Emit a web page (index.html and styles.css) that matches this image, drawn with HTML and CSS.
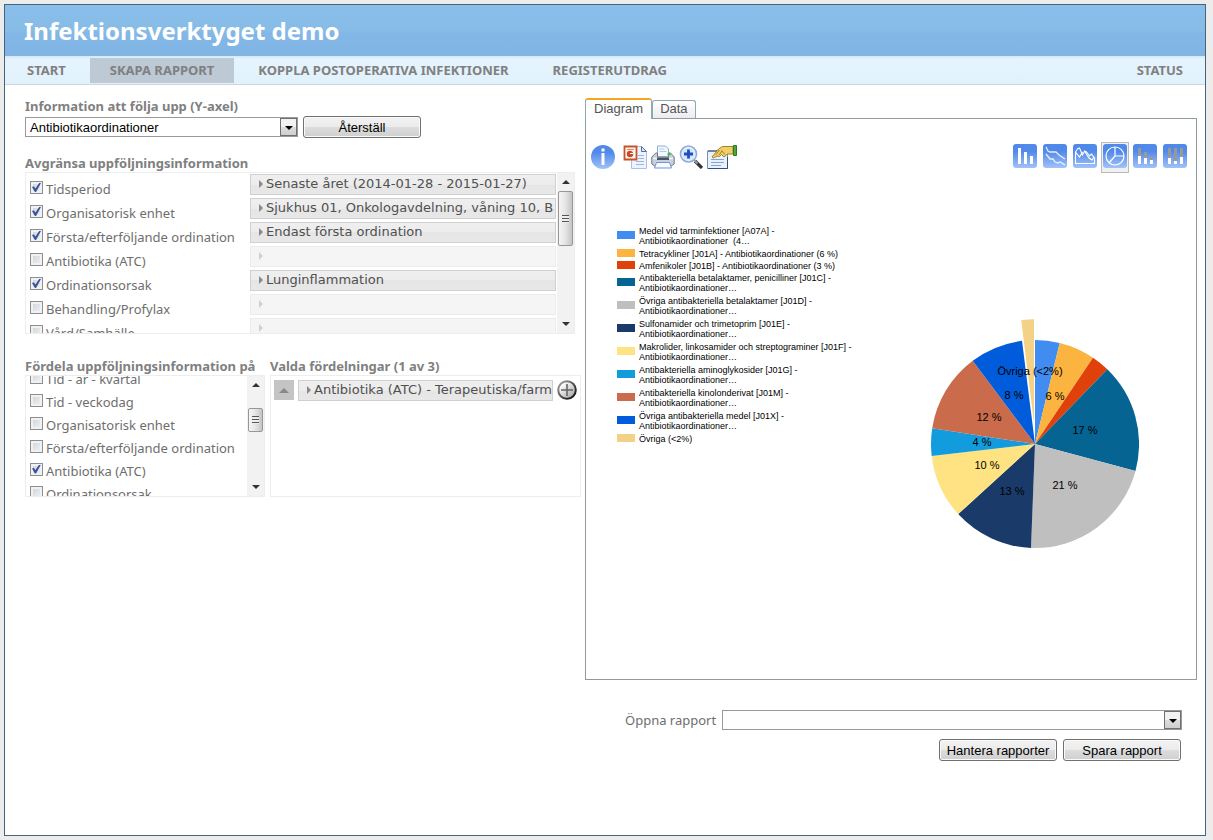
FILE: index.html
```html
<!DOCTYPE html>
<html lang="sv">
<head>
<meta charset="utf-8">
<title>Infektionsverktyget demo</title>
<link rel="stylesheet" href="styles.css">
</head>
<body>
<div class="frame">
  <header class="banner"><h1 class="title">Infektionsverktyget demo</h1></header>
  <nav class="nav">
    <a class="nav-link" href="#">START</a>
    <a class="nav-link current" href="#">SKAPA RAPPORT</a>
    <a class="nav-link" href="#">KOPPLA POSTOPERATIVA INFEKTIONER</a>
    <a class="nav-link" href="#">REGISTERUTDRAG</a>
    <a class="nav-link last" href="#">STATUS</a>
  </nav>
  <main class="content">
    <section class="settings">
      <label class="heading" for="measure">Information att följa upp (Y-axel)</label>
      <div class="measure-row">
        <div class="drop measure">
          <select class="drop-field" id="measure"><option>Antibiotikaordinationer</option></select>
          <span class="drop-arrow"></span>
        </div>
        <button class="btn" type="button">Återställ</button>
      </div>

      <h2 class="heading spaced">Avgränsa uppföljningsinformation</h2>
      <div class="box filters">
        <div class="rows">
          <div class="row"><label class="check"><input type="checkbox" checked>Tidsperiod</label><button class="chip" type="button">Senaste året (2014-01-28 - 2015-01-27)</button></div>
          <div class="row"><label class="check"><input type="checkbox" checked>Organisatorisk enhet</label><button class="chip" type="button">Sjukhus 01, Onkologavdelning, våning 10, B</button></div>
          <div class="row"><label class="check"><input type="checkbox" checked>Första/efterföljande ordination</label><button class="chip" type="button">Endast första ordination</button></div>
          <div class="row"><label class="check"><input type="checkbox">Antibiotika (ATC)</label><button class="chip" type="button" disabled></button></div>
          <div class="row"><label class="check"><input type="checkbox" checked>Ordinationsorsak</label><button class="chip" type="button">Lunginflammation</button></div>
          <div class="row"><label class="check"><input type="checkbox">Behandling/Profylax</label><button class="chip" type="button" disabled></button></div>
          <div class="row"><label class="check"><input type="checkbox">Vård/Samhälle</label><button class="chip" type="button" disabled></button></div>
        </div>
        <div class="scroll"><span class="arrow-up"></span><span class="thumb tall"></span><span class="arrow-down"></span></div>
      </div>

      <div class="split">
        <div class="split-left">
          <h2 class="heading">Fördela uppföljningsinformation på</h2>
          <div class="box dims">
            <div class="rows scrolled">
              <label class="check"><input type="checkbox">Tid - år - kvartal</label>
              <label class="check"><input type="checkbox">Tid - veckodag</label>
              <label class="check"><input type="checkbox">Organisatorisk enhet</label>
              <label class="check"><input type="checkbox">Första/efterföljande ordination</label>
              <label class="check"><input type="checkbox" checked>Antibiotika (ATC)</label>
              <label class="check"><input type="checkbox">Ordinationsorsak</label>
            </div>
            <div class="scroll"><span class="arrow-up"></span><span class="thumb short"></span><span class="arrow-down"></span></div>
          </div>
        </div>
        <div class="split-right">
          <h2 class="heading">Valda fördelningar (1 av 3)</h2>
          <div class="box chosen">
            <button class="move" type="button" aria-label="Flytta upp"></button>
            <button class="chip" type="button">Antibiotika (ATC) - Terapeutiska/farm</button>
            <button class="add" type="button" aria-label="Lägg till">
              <svg width="20" height="20" viewBox="0 0 20 20"><defs><linearGradient id="ball" x1="0" y1="0" x2="1" y2="1"><stop offset="0.2" stop-color="#fff"/><stop offset="1" stop-color="#999"/></linearGradient><linearGradient id="rim" x1="0" y1="0" x2="1" y2="1"><stop offset="0" stop-color="#aaa"/><stop offset="0.8" stop-color="#222"/></linearGradient></defs><circle cx="10" cy="10" r="8.8" fill="url(#ball)" stroke="url(#rim)" stroke-width="2"/><path d="M10 4v12M4 10h12" stroke="#666" stroke-width="1.6"/></svg>
            </button>
          </div>
        </div>
      </div>
    </section>

    <section class="report">
      <div class="tabs">
        <button class="tab active" type="button">Diagram</button>
        <button class="tab" type="button">Data</button>
      </div>
      <div class="panel">
        <div class="toolbar">
          <button class="tool" type="button" aria-label="Information"><svg width="24" height="24" viewBox="0 0 24 24"><defs><linearGradient id="blue" x1="0" y1="0" x2="0" y2="1"><stop offset="0.3" stop-color="#5089ea"/><stop offset="1" stop-color="#a3c2f8"/></linearGradient></defs><circle cx="12" cy="12" r="12" fill="url(#blue)"/><path d="M10.500 8h3v12h-3zM10.500 3.500h3v3h-3z" fill="#fff"/></svg></button>
          <button class="tool" type="button" aria-label="PowerPoint"><svg width="24" height="24" viewBox="0 0 24 24"><path d="M8.500 1.500h10l5 5v17h-15z" fill="#edf3fd" stroke="#a9c0e6"/><path d="M18.500 1.500v5h5z" fill="#dce8f8" stroke="#54709a"/><path d="M15 10.500h6M15 13.500h6M13 16.500h8M13 19.500h8" stroke="#9bb7e0"/><path d="M1.500 1.500h12v13h-12z" fill="#fff5ec" stroke="#c5532f" stroke-width="1.800"/><circle cx="7" cy="9" r="3.200" fill="#c8492b"/><path d="M7 8.500h3" stroke="#fff"/><path d="M4 4.500h7" stroke="#d88a6f"/></svg></button>
          <button class="tool" type="button" aria-label="Skriv ut"><svg width="24" height="24" viewBox="0 0 24 24"><path d="M6.500 1h8l3 3v8h-11z" fill="#f4f8ff" stroke="#8eabd8"/><path d="M8.500 4h5M8.500 6.500h7" stroke="#b5c8e8"/><path d="M.8 12l4-4h1.700v4h11V8h2l3.700 4v7l-3 2h-16.500l-2.900-2z" fill="#c9d0da" stroke="#6c7a8f"/><path d="M2 13.500h20" stroke="#f3f5f8" stroke-width="1.500"/><path d="M6 12.500h12v2.500H6z" fill="#4a5563"/><path d="M5.500 17.500h13l2 5.500H3.500z" fill="#f7fbff" stroke="#6f97d4"/><circle cx="18" cy="9" r="1.600" fill="#36ca32"/></svg></button>
          <button class="tool" type="button" aria-label="Zooma in"><svg width="24" height="24" viewBox="0 0 24 24"><path d="M16 16l7 7" stroke="#30323a" stroke-width="3.200"/><path d="M14.500 14.500l4 4" stroke="#999" stroke-width="2"/><circle cx="9.500" cy="9" r="8" fill="#e5f1ff" stroke="#8fabdc" stroke-width="1.600"/><circle cx="9.500" cy="9" r="6" fill="#d5e6fb"/><path d="M9.500 4.500v9M5 9h9" stroke="#1e4fbf" stroke-width="2.800"/></svg></button>
          <button class="tool" type="button" aria-label="Egenskaper"><svg width="30" height="24" viewBox="0 0 30 24"><path d="M.5 6h20v17.500H.5z" fill="#e9f1fd" stroke="#7590bb"/><path d="M1 6h12" stroke="#54709a" stroke-width="1.500"/><path d="M20.500 12v11.500H1" fill="none" stroke="#33507d"/><path d="M4 14.500h13M4 17.500h13M4 20.500h10" stroke="#88a3d0"/><path d="M5 12L11.500 4l4-2.500H26V9h-5.500l-3.500 3-2.500-2.500-2 2-2.500-.5L6.500 13z" fill="#efcf6c" stroke="#a9821d"/><path d="M12.500 5L9 9.500M15 6l-3 4M14.500 5.500l3.500 4" fill="none" stroke="#a9821d"/><path d="M26.500 .5h3v10h-3z" fill="#4da53e" stroke="#2b7a20"/></svg></button>
          <span class="fill"></span>
          <button class="kind" type="button" aria-label="Stapeldiagram"><svg width="24" height="24" viewBox="0 0 24 24"><rect width="24" height="24" rx="3" fill="url(#blue)"/><path d="M5 4h3v16H5zM11 8h3v12h-3zM17 12h3v8h-3z" fill="#fff"/></svg></button>
          <button class="kind" type="button" aria-label="Linjediagram"><svg width="24" height="24" viewBox="0 0 24 24"><rect width="24" height="24" rx="3" fill="url(#blue)"/><path d="M3 3l2 4 2 1h6l3 3 6 4M3 10l4 5 3 0 2 3 3 1 2-1 5 3" fill="none" stroke="#fff" stroke-opacity=".85" stroke-width="1.300"/></svg></button>
          <button class="kind" type="button" aria-label="Ytdiagram"><svg width="24" height="24" viewBox="0 0 24 24"><rect width="24" height="24" rx="3" fill="url(#blue)"/><path d="M2.500 8v11.500h19V14l-3-4-2 2-3-4-2-1-2 4-3-7-2 1-2 3 4 5 3-5M12 8l4 6 3 2 2-3" fill="none" stroke="#fff" stroke-width="1.100"/></svg></button>
          <button class="kind selected" type="button" aria-label="Cirkeldiagram"><svg width="24" height="24" viewBox="0 0 24 24"><rect width="24" height="24" rx="3" fill="url(#blue)"/><path d="M12 3v9h9M12 12l-6 7" fill="none" stroke="#fff" stroke-width="1.200"/><circle cx="12" cy="12" r="9" fill="none" stroke="#fff" stroke-width="1.200"/></svg></button>
          <button class="kind" type="button" aria-label="Staplat diagram"><svg width="24" height="24" viewBox="0 0 24 24"><rect width="24" height="24" rx="3" fill="url(#blue)"/><path d="M5 12h3v8H5zM11 14h3v6h-3zM17 16h3v4h-3z" fill="#fff"/><path d="M5 4h3v8H5zM11 8h3v6h-3zM17 12h3v4h-3z" fill="#999"/></svg></button>
          <button class="kind" type="button" aria-label="Procentstaplat diagram"><svg width="24" height="24" viewBox="0 0 24 24"><rect width="24" height="24" rx="3" fill="url(#blue)"/><path d="M5 14h3v6H5zM11 17h3v3h-3zM17 13h3v7h-3z" fill="#fff"/><path d="M5 4h3v10H5zM11 4h3v13h-3zM17 4h3v9h-3z" fill="#999"/></svg></button>
        </div>
        <div class="chart">
          <ul class="legend">
            <li class="entry"><i class="swatch c1"></i><span>Medel vid tarminfektioner [A07A] -<br>Antibiotikaordinationer&nbsp; (4…</span></li>
            <li class="entry single"><i class="swatch c2"></i><span>Tetracykliner [J01A] - Antibiotikaordinationer (6 %)</span></li>
            <li class="entry single"><i class="swatch c3"></i><span>Amfenikoler [J01B] - Antibiotikaordinationer (3 %)</span></li>
            <li class="entry"><i class="swatch c4"></i><span>Antibakteriella betalaktamer, penicilliner [J01C] -<br>Antibiotikaordinationer…</span></li>
            <li class="entry"><i class="swatch c5"></i><span>Övriga antibakteriella betalaktamer [J01D] -<br>Antibiotikaordinationer…</span></li>
            <li class="entry"><i class="swatch c6"></i><span>Sulfonamider och trimetoprim [J01E] -<br>Antibiotikaordinationer…</span></li>
            <li class="entry"><i class="swatch c7"></i><span>Makrolider, linkosamider och streptograminer [J01F] -<br>Antibiotikaordinationer…</span></li>
            <li class="entry"><i class="swatch c8"></i><span>Antibakteriella aminoglykosider [J01G] -<br>Antibiotikaordinationer…</span></li>
            <li class="entry"><i class="swatch c9"></i><span>Antibakteriella kinolonderivat [J01M] -<br>Antibiotikaordinationer…</span></li>
            <li class="entry"><i class="swatch c10"></i><span>Övriga antibakteriella medel [J01X] -<br>Antibiotikaordinationer…</span></li>
            <li class="entry single"><i class="swatch c11"></i><span>Övriga (&lt;2%)</span></li>
          </ul>
          <svg class="pie" width="208" height="230" viewBox="-104 -125 208 230" role="img" aria-label="Cirkeldiagram">
            <path d="M0 0V-104A104 104 0 0 1 24.700 -101Z" fill="#418cf0"/>
            <path d="M0 0L24.700 -101A104 104 0 0 1 58 -86.300Z" fill="#fcb441"/>
            <path d="M0 0L58 -86.300A104 104 0 0 1 72.300 -74.800Z" fill="#e0400a"/>
            <path d="M0 0L72.300 -74.800A104 104 0 0 1 100.500 26.900Z" fill="#056492"/>
            <path d="M0 0L100.500 26.900A104 104 0 0 1 -4 103.900Z" fill="#bfbfbf"/>
            <path d="M0 0L-4 103.900A104 104 0 0 1 -76.800 70.100Z" fill="#1a3b69"/>
            <path d="M0 0L-76.800 70.100A104 104 0 0 1 -103.300 12Z" fill="#ffe382"/>
            <path d="M0 0L-103.300 12A104 104 0 0 1 -102.800 -15.700Z" fill="#129cdd"/>
            <path d="M0 0L-102.800 -15.700A104 104 0 0 1 -62.300 -83.300Z" fill="#ca6b4b"/>
            <path d="M0 0L-62.300 -83.300A104 104 0 0 1 -13 -103.200Z" fill="#005cdb"/>
            <path d="M-1 -21L-13.800 -123.800A104 104 0 0 1 -1 -124.700Z" fill="#f3d288"/>
            <g class="pie-text">
              <text x="-5" y="-69">Övriga (&lt;2%)</text>
              <text x="-21" y="-45">8 %</text>
              <text x="20" y="-44">6 %</text>
              <text x="50" y="-10">17 %</text>
              <text x="30" y="45">21 %</text>
              <text x="-23" y="51">13 %</text>
              <text x="-48" y="25">10 %</text>
              <text x="-53" y="2">4 %</text>
              <text x="-46" y="-23">12 %</text>
            </g>
          </svg>
        </div>
      </div>
      <div class="saved">
        <div class="open-row">
          <label class="open-label" for="saved-report">Öppna rapport</label>
          <div class="drop wide">
            <select class="drop-field" id="saved-report"><option></option></select>
            <span class="drop-arrow"></span>
          </div>
        </div>
        <div class="actions">
          <button class="btn" type="button">Hantera rapporter</button>
          <button class="btn" type="button">Spara rapport</button>
        </div>
      </div>
    </section>
  </main>
</div>
</body>
</html>
```
FILE: styles.css
```css
* { box-sizing: border-box; }
body {
  margin: 0;
  min-height: 100vh;
  padding: 4px 7px 4px 4px;
  display: flex;
  background: #ececec;
  color: #6e6e6e;
  font: 13px "Noto Sans", sans-serif;
}
button, select { font: inherit; color: inherit; margin: 0; }
.frame { flex: 1; min-width: 0; background: #fff; border: 1px solid #48627a; }

.banner {
  height: 51px;
  padding: 0 19px;
  display: flex;
  align-items: center;
  background: linear-gradient(#8abeea, #87bce7 50%, #82b7e7 55%, #80b4e3);
}
.title { margin: 0; color: #fff; font-size: 24px; line-height: 32px; }
.nav {
  display: flex;
  gap: 4px;
  padding: 2px 2px 1px;
  background: linear-gradient(#d4e8f5, #e4f3fd 10%, #e4f3fd 55%, #dff2fb);
  border-bottom: 1px solid #d5d5d5;
}
.nav-link {
  padding: 0 20px;
  line-height: 25px;
  font-size: 13px;
  font-weight: bold;
  color: #808080;
  text-decoration: none;
}
.current { background: #bdc9d5; }
.last { margin-left: auto; }

.content { display: flex; gap: 4px; padding: 12px 8px 12px 20px; }
.settings { width: 556px; flex: none; }
.heading {
  display: block;
  margin: 0;
  color: #808080;
  font-size: 13px;
  font-weight: bold;
  line-height: 18px;
  white-space: nowrap;
}
.spaced { margin-top: 16px; }

.measure-row { display: flex; align-items: center; gap: 5px; padding-top: 1px; }
.drop { position: relative; height: 20px; color: #000; }
.measure { width: 273px; }
.wide { flex: 1; }
.drop-field {
  width: 100%;
  height: 20px;
  padding: 0 20px 0 4px;
  appearance: none;
  background: #fff;
  border: 1px solid #999;
  border-radius: 0;
  font: 13px "Liberation Sans", sans-serif;
}
.drop-arrow {
  position: absolute;
  top: 1px;
  right: 1px;
  width: 17px;
  height: 18px;
  border: 1px solid #707070;
  background: linear-gradient(#f2f2f2 50%, #ddd 50%, #cfcfcf);
  pointer-events: none;
}
.drop-arrow::after {
  content: "";
  position: absolute;
  left: 4px;
  top: 7px;
  border: 4px solid transparent;
  border-top-color: #000;
  border-bottom: 0;
}
.btn {
  width: 118px;
  height: 22px;
  padding: 0;
  border: 1px solid #707070;
  border-radius: 3px;
  box-shadow: inset 0 0 0 1px #fafafa;
  background: linear-gradient(#f2f2f2, #ebebeb 50%, #ddd 50%, #cfcfcf);
  color: #000;
  font: 13px "Liberation Sans", sans-serif;
  white-space: nowrap;
}

.box { display: flex; overflow: hidden; border: 1px solid #ededed; }
.filters { height: 162px; width: 550px; }
.rows { flex: 1; min-width: 0; }
.filters .rows { padding-top: 1px; }
.row { display: grid; grid-template-columns: 224px 1fr; align-items: start; height: 24px; padding-right: 1px; }
.check { display: flex; align-items: center; gap: 3px; height: 23px; padding-left: 4px; white-space: nowrap; }
.row .check { height: 30px; }
.check input {
  appearance: none;
  width: 13px;
  height: 13px;
  margin: 0 0 3px;
  border: 1px solid #8a8f93;
  background: linear-gradient(135deg, #ccd0d6, #f4f4f4);
  box-shadow: inset 0 0 0 2px #f1f1f1;
}
.check input:checked::before {
  content: "";
  display: block;
  width: 9px;
  height: 9px;
  margin: 1px;
  background: #3c549c;
  clip-path: polygon(0 45%, 20% 35%, 38% 62%, 80% 0, 100% 0, 45% 100%, 32% 100%);
}
.chip {
  width: 100%;
  height: 21px;
  padding: 0 0 2px 8px;
  overflow: hidden;
  border: 1px solid #d0d0d0;
  background: linear-gradient(#efefef, #ececec 50%, #e5e5e5 50%, #e8e8e8);
  color: #505050;
  font: 13px/17px "DejaVu Sans", sans-serif;
  text-align: left;
  white-space: nowrap;
}
.chip::before {
  content: "";
  display: inline-block;
  margin-right: 3px;
  border: 4px solid transparent;
  border-left-color: #888;
  border-right: 0;
}
.chip:disabled { background: #f5f5f5; border-color: #ececec; }
.chip:disabled::before { border-left-color: #d0d0d0; }

.scroll {
  width: 17px;
  flex: none;
  display: flex;
  flex-direction: column;
  align-items: center;
  padding: 7px 1px;
  background: #f2f2f2;
}
.arrow-up { border: 4px solid transparent; border-bottom-color: #333; border-top: 0; }
.arrow-down { border: 4px solid transparent; border-top-color: #333; border-bottom: 0; margin-top: auto; }
.thumb {
  width: 15px;
  display: flex;
  border: 1px solid #979797;
  border-radius: 2px;
  background: linear-gradient(90deg, #f5f5f5, #e4e4e4 50%, #c4c4c8);
}
.thumb::after {
  content: "";
  margin: auto;
  width: 7px;
  height: 8px;
  background: repeating-linear-gradient(#555 0 1px, #eee 1px 3px);
}
.tall { height: 55px; margin-top: 7px; }
.short { height: 24px; margin-top: 21px; }

.split { display: flex; gap: 5px; margin-top: 23px; }
.split-left { width: 240px; }
.split-right { flex: 1; min-width: 0; }
.dims, .chosen { height: 122px; }
.scrolled { margin-top: -9px; }
.chosen { gap: 4px; padding: 4px 3px; align-items: flex-start; }
.move {
  width: 20px;
  height: 20px;
  flex: none;
  display: grid;
  place-items: center;
  padding: 0;
  border: 0;
  background: #c4c4c4;
}
.move::before { content: ""; width: 0; border: 5px solid transparent; border-bottom-color: #888; border-top: 0; }
.add { flex: none; padding: 0; border: 0; background: none; line-height: 0; }

.report { flex: 1; min-width: 0; padding-top: 1px; }
.tabs { display: flex; align-items: flex-end; position: relative; }
.tab {
  height: 18px;
  padding: 0 7px 2px;
  border: 1px solid #91a7b4;
  border-bottom: 0;
  border-radius: 3px 3px 0 0;
  background: linear-gradient(#fff, #ececf0);
  color: #555;
  font: 13px/15px "Liberation Sans", sans-serif;
}
.active {
  height: 21px;
  padding: 0 8px 3px;
  margin-bottom: -1px;
  border-top: 2px solid #f5a623;
  background: linear-gradient(#fff, #fcfcfe);
}
.panel { min-height: 562px; border: 1px solid #919b9c; padding: 23px 7px 0 5px; }
.toolbar { display: flex; align-items: center; gap: 4px; }
.tool, .kind { padding: 0; border: 0; background: none; line-height: 0; }
.tool { margin-bottom: 2px; }
.tool:first-child { margin-right: 4px; }
.fill { flex: 1; }
.kind { width: 28px; height: 31px; padding: 0 0 3px; border: 1px solid transparent; margin-right: -2px; }
.kind:last-child { margin-right: 0; }
.selected { border-color: #bbb; background: #f0f0f0; }
.chart { display: flex; align-items: flex-start; padding: 53px 50px 0 26px; color: #000; }
.legend { flex: 1; margin: 0; padding: 0; display: grid; gap: 3px; list-style: none; font: 9px/10px "Liberation Sans", sans-serif; }
.entry { display: flex; align-items: center; gap: 4px; height: 20px; }
.single { height: 9px; }
.swatch { width: 18px; height: 8px; margin-bottom: 2px; }
.c1 { background: #418cf0; }
.c2 { background: #fcb441; }
.c3 { background: #e0400a; }
.c4 { background: #056492; }
.c5 { background: #bfbfbf; }
.c6 { background: #1a3b69; }
.c7 { background: #ffe382; }
.c8 { background: #129cdd; }
.c9 { background: #ca6b4b; }
.c10 { background: #005cdb; }
.c11 { background: #f3d288; }
.pie { flex: none; margin-top: 93px; }
.pie-text { font: 11px "Liberation Sans", sans-serif; text-anchor: middle; }

.saved { padding: 30px 15px 0 40px; }
.open-row { display: flex; align-items: center; gap: 6px; }
.actions { display: flex; justify-content: flex-end; gap: 6px; padding: 9px 1px 0 0; }
```
